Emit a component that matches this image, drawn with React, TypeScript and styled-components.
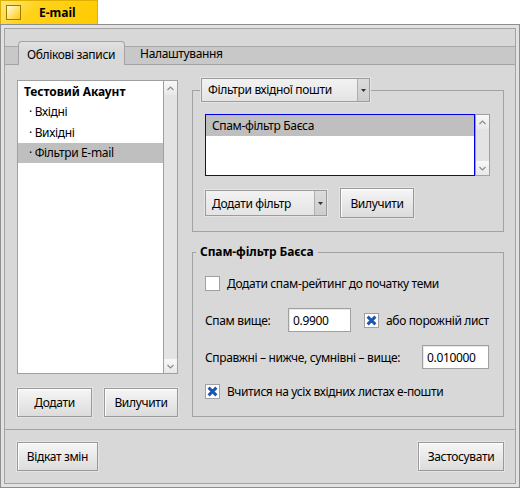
import React from "react";
import styled, { createGlobalStyle } from "styled-components";

const GlobalStyle = createGlobalStyle`
  html, body { margin: 0; padding: 0; background: #ffffff; }
  body {
    font-family: "Noto Sans", "DejaVu Sans", sans-serif;
    font-size: 12px;
    letter-spacing: -0.35px;
    color: #000;
  }
  * { box-sizing: border-box; }
`;

const Screen = styled.div`
  width: 520px;
  height: 488px;
  display: flex;
  flex-direction: column;
  background: #ffffff;
`;

const TitleTab = styled.div`
  width: 98px;
  height: 24px;
  flex: none;
  display: flex;
  align-items: center;
  padding-left: 5px;
  background: linear-gradient(135deg, #ffe880 0%, #ffd21a 35%, #ffcb00 100%);
  border: 1px solid #e0b000;
  border-bottom: none;
`;

const TitleIcon = styled.span`
  width: 15px;
  height: 15px;
  flex: none;
  border: 1px solid #9c7a00;
  background: linear-gradient(135deg, #fffbe6 0%, #ffe680 45%, #ffcb00 100%);
`;

const TitleText = styled.span`
  margin-left: 18px;
  font-weight: bold;
  font-size: 12px;
  letter-spacing: 0;
`;

const WindowFrame = styled.div`
  flex: 1;
  display: flex;
  border: 1px solid #8e8e8e;
  padding: 3px;
  background: #e2e2e2;
`;

const WindowBody = styled.div`
  flex: 1;
  display: flex;
  flex-direction: column;
  background: #d8d8d8;
  border: 1px solid #a3a3a3;
  padding-top: 12px;
`;

const TabStrip = styled.div`
  height: 24px;
  flex: none;
  display: flex;
  align-items: stretch;
  padding-left: 13px;
  border-bottom: 1px solid #a3a3a3;
  background: linear-gradient(
    to bottom,
    transparent 0,
    transparent 5px,
    #a8a8a8 5px,
    #a8a8a8 6px,
    #c8c8c8 6px
  );
`;

const Tab = styled.div<{ $active?: boolean }>`
  position: relative;
  display: flex;
  align-items: center;
  white-space: nowrap;
  padding: ${(p) => (p.$active ? "1px 9px 0 8px" : "2px 15px 0 15px")};
  ${(p) =>
    p.$active
      ? `
    background: linear-gradient(#e2e2e2, #d8d8d8 40%);
    border: 1px solid #a3a3a3;
    border-bottom: none;
    border-radius: 4px 4px 0 0;
    margin-bottom: -1px;
    z-index: 1;
  `
      : ""}
`;

const TabPanel = styled.div`
  height: 365px;
  flex: none;
  display: flex;
  gap: 14px;
  padding: 13px 11px 12px 12px;
  border-bottom: 1px solid #a3a3a3;
`;

const LeftColumn = styled.div`
  width: 161px;
  flex: none;
  display: flex;
  flex-direction: column;
  gap: 14px;
  padding-top: 2px;
`;

const RightColumn = styled.div`
  width: 312px;
  flex: none;
  display: flex;
  flex-direction: column;
  gap: 12px;
`;

const ListBox = styled.div<{ $height: number }>`
  height: ${(p) => p.$height}px;
  flex: none;
  display: flex;
`;

const ListArea = styled.div<{ $focused?: boolean }>`
  flex: 1;
  display: flex;
  flex-direction: column;
  background: #ffffff;
  border: 1px solid ${(p) => (p.$focused ? "#0000e0" : "#a0a0a0")};
  ${(p) => (p.$focused ? "" : "border-right: none;")}
`;

const ListRow = styled.div<{ $selected?: boolean; $indent?: boolean; $bold?: boolean; $h: number }>`
  height: ${(p) => p.$h}px;
  flex: none;
  display: flex;
  align-items: center;
  padding-left: ${(p) => (p.$indent ? 11 : 6)}px;
  font-weight: ${(p) => (p.$bold ? "bold" : "normal")};
  letter-spacing: ${(p) => (p.$bold ? "-0.1px" : "inherit")};
  background: ${(p) => (p.$selected ? "#bfbfbf" : "transparent")};
  white-space: nowrap;
`;

const ScrollBar = styled.div`
  width: 15px;
  flex: none;
  display: flex;
  flex-direction: column;
  border: 1px solid #a0a0a0;
  background: #f2f2f2;
`;

const ScrollArrow = styled.div`
  height: 14px;
  flex: none;
  display: flex;
  align-items: center;
  justify-content: center;
  background: linear-gradient(#f8f8f8, #e8e8e8);
`;

const ScrollTrack = styled.div`
  flex: 1;
  background-color: #f0f0f0;
  background-image: radial-gradient(circle, #d4d4d4 0.6px, transparent 0.8px);
  background-size: 2px 2px;
`;

const ButtonRow = styled.div<{ $justify?: string; $gap?: number }>`
  display: flex;
  align-items: center;
  justify-content: ${(p) => p.$justify || "flex-start"};
  gap: ${(p) => p.$gap ?? 0}px;
`;

const Button = styled.div<{ $width: number; $height?: number }>`
  width: ${(p) => p.$width}px;
  height: ${(p) => p.$height ?? 29}px;
  flex: none;
  display: flex;
  align-items: center;
  justify-content: center;
  border: 1px solid #999999;
  background: linear-gradient(#f6f6f6, #e6e6e6 60%, #dcdcdc);
  box-shadow: inset 1px 1px 0 #ffffff, 0 0 0 1px #e4e4e4;
  white-space: nowrap;
`;

const Popup = styled.div<{ $width: number; $height: number }>`
  width: ${(p) => p.$width}px;
  height: ${(p) => p.$height}px;
  flex: none;
  display: flex;
  border: 1px solid #9c9c9c;
  box-shadow: 0 0 0 1px #e4e4e4;
  background: linear-gradient(#f2f2f2, #e4e4e4);
`;

const PopupLabel = styled.div`
  flex: 1;
  display: flex;
  align-items: center;
  padding-left: 6px;
  white-space: nowrap;
`;

const PopupArrow = styled.div`
  width: 12px;
  flex: none;
  display: flex;
  align-items: center;
  justify-content: center;
  border-left: 1px solid #b0b0b0;
  background: linear-gradient(#dcdcdc, #cdcdcd);
`;

const Group = styled.fieldset<{ $bottomPad: number }>`
  margin: 0;
  min-width: 0;
  padding: 0 13px ${(p) => p.$bottomPad}px 12px;
  border: 1px solid #a2a2a2;
`;

const GroupLegend = styled.legend<{ $bold?: boolean }>`
  padding: ${(p) => (p.$bold ? "0 4px" : "0")};
  margin-left: ${(p) => (p.$bold ? -9 : -4)}px;
  font-weight: ${(p) => (p.$bold ? "bold" : "normal")};
  letter-spacing: ${(p) => (p.$bold ? "-0.1px" : "inherit")};
  line-height: 16px;
`;

const GroupBody = styled.div<{ $gap: number; $top: number }>`
  display: flex;
  flex-direction: column;
  gap: ${(p) => p.$gap}px;
  padding-top: ${(p) => p.$top}px;
`;

const FormRow = styled.div<{ $height: number; $mt?: number }>`
  height: ${(p) => p.$height}px;
  margin-top: ${(p) => p.$mt ?? 0}px;
  display: flex;
  align-items: center;
  white-space: nowrap;
`;

const FieldLabel = styled.span<{ $width: number }>`
  width: ${(p) => p.$width}px;
  flex: none;
`;

const TextField = styled.div<{ $width: number }>`
  width: ${(p) => p.$width}px;
  height: 24px;
  flex: none;
  display: flex;
  align-items: center;
  padding-left: 4px;
  background: #ffffff;
  border: 1px solid #a0a0a0;
  box-shadow: inset 1px 1px 0 #e8e8e8;
`;

const CheckBox = styled.span<{ $ml?: number }>`
  width: 15px;
  height: 15px;
  flex: none;
  margin-left: ${(p) => p.$ml ?? 1}px;
  margin-right: 7px;
  display: flex;
  align-items: center;
  justify-content: center;
  background: #ffffff;
  border: 1px solid #a0a0a0;
`;

const BottomBar = styled.div`
  flex: 1;
  display: flex;
  align-items: center;
  justify-content: space-between;
  padding: 0 11px 0 12px;
`;

const ArrowUp = () => (
  <svg width="7" height="5" viewBox="0 0 7 5">
    <polyline points="0.5,4 3.5,1 6.5,4" fill="none" stroke="#8c8c8c" strokeWidth="1.2" />
  </svg>
);

const ArrowDown = () => (
  <svg width="7" height="5" viewBox="0 0 7 5">
    <polyline points="0.5,1 3.5,4 6.5,1" fill="none" stroke="#8c8c8c" strokeWidth="1.2" />
  </svg>
);

const PopupTriangle = () => (
  <svg width="5" height="3" viewBox="0 0 5 3">
    <polygon points="0,0 5,0 2.5,3" fill="#333" />
  </svg>
);

const CheckMark = () => (
  <svg width="11" height="11" viewBox="0 0 11 11">
    <path d="M1.6 1.6 L9.4 9.4 M9.4 1.6 L1.6 9.4" stroke="#1d56ad" strokeWidth="2.9" strokeLinecap="butt" />
  </svg>
);

const Scroll = () => (
  <ScrollBar>
    <ScrollArrow>
      <ArrowUp />
    </ScrollArrow>
    <ScrollTrack />
    <ScrollArrow>
      <ArrowDown />
    </ScrollArrow>
  </ScrollBar>
);

export default function App() {
  return (
    <Screen>
      <GlobalStyle />
      <TitleTab>
        <TitleIcon />
        <TitleText>E-mail</TitleText>
      </TitleTab>
      <WindowFrame>
        <WindowBody>
          <TabStrip>
            <Tab $active>Облікові записи</Tab>
            <Tab>Налаштування</Tab>
          </TabStrip>
          <TabPanel>
            <LeftColumn>
              <ListBox $height={294}>
                <ListArea>
                  <ListRow $bold $h={20.5}>Тестовий Акаунт</ListRow>
                  <ListRow $indent $h={20.5}>· Вхідні</ListRow>
                  <ListRow $indent $h={20.5}>· Вихідні</ListRow>
                  <ListRow $indent $selected $h={20.5}>· Фільтри E-mail</ListRow>
                </ListArea>
                <Scroll />
              </ListBox>
              <ButtonRow $justify="space-between">
                <Button $width={75}>Додати</Button>
                <Button $width={74}>Вилучити</Button>
              </ButtonRow>
            </LeftColumn>
            <RightColumn>
              <Group $bottomPad={13}>
                <GroupLegend>
                  <Popup $width={169} $height={24}>
                    <PopupLabel>Фільтри вхідної пошти</PopupLabel>
                    <PopupArrow>
                      <PopupTriangle />
                    </PopupArrow>
                  </Popup>
                </GroupLegend>
                <GroupBody $gap={12} $top={12}>
                  <ListBox $height={62}>
                    <ListArea $focused>
                      <ListRow $selected $h={21}>Спам-фільтр Баєса</ListRow>
                    </ListArea>
                    <Scroll />
                  </ListBox>
                  <ButtonRow $gap={13}>
                    <Popup $width={122} $height={26}>
                      <PopupLabel>Додати фільтр</PopupLabel>
                      <PopupArrow>
                        <PopupTriangle />
                      </PopupArrow>
                    </Popup>
                    <Button $width={74} $height={30}>
                      Вилучити
                    </Button>
                  </ButtonRow>
                </GroupBody>
              </Group>
              <Group $bottomPad={16}>
                <GroupLegend $bold>Спам-фільтр Баєса</GroupLegend>
                <GroupBody $gap={0} $top={14}>
                  <FormRow $height={18}>
                    <CheckBox $ml={0} />
                    Додати спам-рейтинг до початку теми
                  </FormRow>
                  <FormRow $height={24} $mt={16}>
                    <FieldLabel $width={83}>Спам вище:</FieldLabel>
                    <TextField $width={63}>0.9900</TextField>
                    <CheckBox $ml={13}>
                      <CheckMark />
                    </CheckBox>
                    або порожній лист
                  </FormRow>
                  <FormRow $height={24} $mt={13}>
                    <FieldLabel $width={217}>Справжні – нижче, сумнівні – вище:</FieldLabel>
                    <TextField $width={67}>0.010000</TextField>
                  </FormRow>
                  <FormRow $height={18} $mt={13}>
                    <CheckBox $ml={0}>
                      <CheckMark />
                    </CheckBox>
                    Вчитися на усіх вхідних листах е-пошти
                  </FormRow>
                </GroupBody>
              </Group>
            </RightColumn>
          </TabPanel>
          <BottomBar>
            <Button $width={81}>Відкат змін</Button>
            <Button $width={86}>Застосувати</Button>
          </BottomBar>
        </WindowBody>
      </WindowFrame>
    </Screen>
  );
}
